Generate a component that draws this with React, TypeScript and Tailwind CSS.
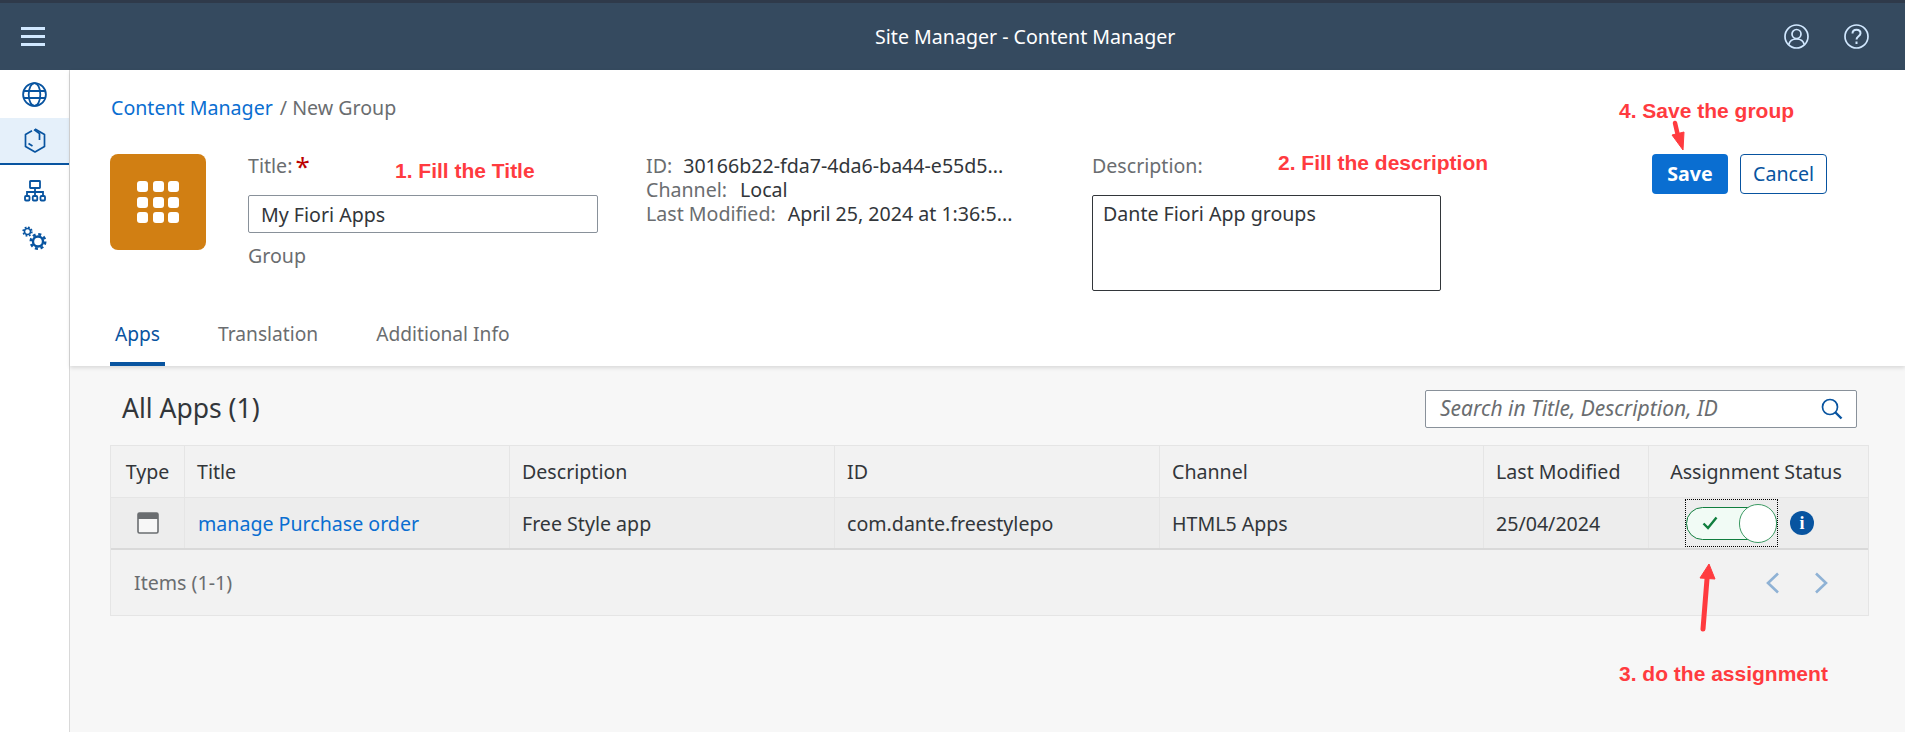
const font = { fontFamily: "'Noto Sans', Roboto, sans-serif" };

function GlobeIcon() {
  return (
    <svg width="25" height="25" viewBox="0 0 25 25" fill="none" stroke="#0854a0" strokeWidth="1.800">
      <circle cx="12.500" cy="12.500" r="11.400" />
      <ellipse cx="12.500" cy="12.500" rx="5.800" ry="11.400" />
      <path d="M1.500 9h22M1.500 16h22" strokeWidth="2" />
    </svg>
  );
}

function CubeIcon() {
  return (
    <svg width="22" height="25" viewBox="0 0 22 25" fill="none" stroke="#0854a0" strokeWidth="1.700" strokeLinejoin="round">
      <path d="M8 2.800L1.500 6.500v12L11 24l9.500-5.500v-12L11 1" />
      <path d="M10 1.600L15.500 5.500V12M4.500 15.500l4 2.500" />
    </svg>
  );
}

function NetworkIcon() {
  return (
    <svg width="22" height="22" viewBox="0 0 22 22" fill="none" stroke="#0854a0" strokeWidth="1.800">
      <rect x="6" y="1" width="10" height="7" rx="0.500" />
      <path d="M11 8v8M3 15.500V12h16v3.500" />
      <rect x="1" y="16" width="4.500" height="4.500" rx="1" />
      <rect x="8.750" y="16" width="4.500" height="4.500" rx="1" />
      <rect x="16.500" y="16" width="4.500" height="4.500" rx="1" />
    </svg>
  );
}

function GearsIcon() {
  return (
    <svg width="25" height="25" viewBox="0 0 25 25" fill="none" stroke="#0854a0">
      <circle cx="5.500" cy="5.500" r="3" strokeWidth="1.500" />
      <circle cx="5.500" cy="5.500" r="4.400" strokeWidth="1.500" strokeDasharray="1.800 1.660" />
      <circle cx="16" cy="15.500" r="5" strokeWidth="2.400" />
      <circle cx="16" cy="15.500" r="7.200" strokeWidth="2.600" strokeDasharray="3 2.660" />
    </svg>
  );
}

function GridIcon() {
  return (
    <div className="grid grid-cols-3 gap-[4.5px]">
      {Array.from({ length: 9 }).map((_, i) => (
        <div key={i} className="h-[11px] w-[11px] rounded-[3px] bg-white" />
      ))}
    </div>
  );
}

function ToggleSwitch() {
  return (
    <div className="flex h-[48px] w-[93px] items-center border border-dotted border-black">
      <div className="relative flex h-[33px] w-[92px] items-center rounded-full border border-[#107e3e] bg-[#f1fbf5] pl-[15px]">
        <svg width="16" height="14" viewBox="0 0 16 14" fill="none" stroke="#107e3e" strokeWidth="2.400">
          <path d="M1.500 7.500l4.500 4.500 8.500-10.500" />
        </svg>
        <div className="absolute right-[-1px] top-[-4px] h-[39px] w-[38px] rounded-full border border-[#3c9a63] bg-white" />
      </div>
    </div>
  );
}

const columns = "grid grid-cols-[74px_325px_325px_325px_324px_165px_221px]";
const cell = "flex items-center border-r border-[#e5e5e5] px-[12px]";

export default function App() {
  return (
    <div className="relative flex h-[732px] w-[1905px] flex-col overflow-hidden bg-white text-[19.6px] text-[#32363a]" style={font}>
      <header className="relative flex h-[70px] shrink-0 items-center justify-between border-t-[3px] border-[#2f3a4a] bg-[#354a5f] pl-[21px] pr-[36px]">
        <div className="flex w-[24px] flex-col gap-[5px]">
          <div className="h-[3px] bg-[#d1e8ff]" />
          <div className="h-[3px] bg-[#d1e8ff]" />
          <div className="h-[3px] bg-[#d1e8ff]" />
        </div>
        <span className="absolute left-[875px] text-white">Site Manager - Content Manager</span>
        <div className="flex items-center gap-[35px]">
          <svg width="25" height="25" viewBox="0 0 25 25" fill="none" stroke="#d1e8ff" strokeWidth="1.700">
            <circle cx="12.500" cy="12.500" r="11.500" />
            <circle cx="12.500" cy="10" r="4.500" />
            <path d="M4.800 20.500c.8-3.500 4-5.500 7.700-5.500s6.900 2 7.700 5.500" />
          </svg>
          <svg width="25" height="25" viewBox="0 0 25 25" fill="none" stroke="#d1e8ff" strokeWidth="1.700">
            <circle cx="12.500" cy="12.500" r="11.500" />
            <path d="M8.500 9.500c0-2.300 1.700-3.800 4-3.800s4 1.500 4 3.500c0 3-4 3-4 6.300" strokeWidth="2" />
            <path d="M12.500 17.500v2.500" strokeWidth="2" />
          </svg>
        </div>
      </header>

      <div className="flex min-h-0 flex-1">
        <nav className="flex w-[70px] shrink-0 flex-col border-r border-[#d9d9d9] bg-white">
          <div className="flex h-[48px] items-center justify-center"><GlobeIcon /></div>
          <div className="flex h-[47px] items-center justify-center border-b-2 border-[#0854a0] bg-[#e5f0fa]"><CubeIcon /></div>
          <div className="flex h-[50px] items-center justify-center pt-[2px]"><NetworkIcon /></div>
          <div className="flex h-[46px] items-center justify-center"><GearsIcon /></div>
        </nav>

        <main className="flex min-w-0 flex-1 flex-col bg-[#f7f7f7]">
          <section className="relative z-10 h-[296px] shrink-0 bg-white pl-[41px] shadow-[0_2px_4px_rgba(0,0,0,0.12)]">
            <div className="flex h-[50px] items-end leading-[24px]">
              <span className="text-[#0a6ed1]">Content Manager</span>
              <span className="ml-[7px] text-[#6a6d70]">/ New Group</span>
            </div>
            <div className="mt-[34px] ml-[-1px] flex h-[136px]">
              <div className="flex h-[96px] w-[96px] items-center justify-center rounded-[8px] bg-[#d17f13]">
                <GridIcon />
              </div>

              <div className="ml-[42px] w-[350px]">
                <div className="flex h-[24px] items-center leading-[24px] text-[#6a6d70]">
                  Title:
                  <span className="ml-[3px] text-[26px] text-[#bb0000]">*</span>
                </div>
                <input
                  readOnly
                  value="My Fiori Apps"
                  className="mt-[17px] h-[38px] w-full rounded-[2px] border border-[#89919a] px-[12px] outline-none"
                />
                <div className="mt-[11px] leading-[24px] text-[#6a6d70]">Group</div>
              </div>

              <div className="ml-[48px] w-[446px] leading-[24px]">
                <div><span className="mr-[11px] text-[#6a6d70]">ID:</span>30166b22-fda7-4da6-ba44-e55d5...</div>
                <div><span className="mr-[13px] text-[#6a6d70]">Channel:</span>Local</div>
                <div><span className="mr-[12px] text-[#6a6d70]">Last Modified:</span>April 25, 2024 at 1:36:5...</div>
              </div>

              <div className="w-[349px]">
                <div className="leading-[24px] text-[#6a6d70]">Description:</div>
                <textarea
                  readOnly
                  value="Dante Fiori App groups"
                  className="mt-[17px] h-[96px] w-full resize-none rounded-[2px] border border-[#32363a] px-[10px] py-[6px] leading-[24px] outline-none"
                />
              </div>

              <div className="ml-[211px] flex h-[40px] gap-[12px]">
                <button type="button" className="w-[76px] rounded-[4px] bg-[#0a6ed1] font-bold text-white">Save</button>
                <button type="button" className="w-[87px] rounded-[4px] border border-[#0854a0] bg-white text-[#0854a0]">Cancel</button>
              </div>
            </div>
            <div className="absolute bottom-0 left-[40px] flex gap-[48px] text-[19.2px] text-[#6a6d70]">
              <div className="h-[56px] border-b-4 border-[#0854a0] px-[5px] pt-[12px] leading-[24px] text-[#0854a0]">Apps</div>
              <div className="h-[56px] px-[5px] pt-[12px] leading-[24px]">Translation</div>
              <div className="h-[56px] px-[5px] pt-[12px] leading-[24px]">Additional Info</div>
            </div>
          </section>

          <section className="pl-[40px] pr-[36px]">
            <div className="mt-[24px] flex h-[38px] items-center justify-between pl-[12px] pr-[12px]">
              <h2 className="text-[26.5px] font-normal">All Apps (1)</h2>
              <div className="flex h-[38px] w-[432px] items-center justify-between rounded-[2px] border border-[#89919a] bg-white pl-[14px] pr-[13px]">
                <span className="text-[21px] italic text-[#6a6d70]">Search in Title, Description, ID</span>
                <svg width="22" height="22" viewBox="0 0 22 22" fill="none" stroke="#0854a0" strokeWidth="1.700">
                  <circle cx="9" cy="9" r="7.500" />
                  <path d="M14.500 14.500l6 6" strokeWidth="2.400" />
                </svg>
              </div>
            </div>

            <div className="mt-[17px] border border-[#e5e5e5]">
              <div className={`${columns} h-[52px] border-b border-[#e5e5e5] bg-[#f2f2f2]`}>
                <div className={`${cell} justify-center`}>Type</div>
                <div className={cell}>Title</div>
                <div className={cell}>Description</div>
                <div className={cell}>ID</div>
                <div className={cell}>Channel</div>
                <div className={cell}>Last Modified</div>
                <div className="flex items-center justify-center pr-[7px]">Assignment Status</div>
              </div>
              <div className={`${columns} h-[52px] border-b-2 border-[#d9d9d9] bg-[#ededed]`}>
                <div className={`${cell} justify-center`}>
                  <svg width="22" height="22" viewBox="0 0 22 22" fill="none">
                    <rect x="1" y="1" width="20" height="20" rx="1.500" stroke="#6a6d70" strokeWidth="1.600" fill="#f7f7f7" />
                    <rect x="1" y="1" width="20" height="6" fill="#6a6d70" />
                  </svg>
                </div>
                <div className={`${cell} pt-[1px]`}><span className="ml-[1px] text-[#0a6ed1]">manage Purchase order</span></div>
                <div className={`${cell} pt-[1px]`}>Free Style app</div>
                <div className={`${cell} pt-[1px]`}>com.dante.freestylepo</div>
                <div className={`${cell} pt-[1px]`}>HTML5 Apps</div>
                <div className={`${cell} pt-[1px]`}>25/04/2024</div>
                <div className="flex items-center pl-[36px]">
                  <ToggleSwitch />
                  <div className="ml-[12px] flex h-[24px] w-[24px] items-center justify-center rounded-full bg-[#0854a0] font-['Liberation_Serif'] text-[18px] font-bold text-white">i</div>
                </div>
              </div>
              <div className="flex h-[65px] items-center justify-between bg-[#f2f2f2] pl-[23px] pr-[40px] text-[#6a6d70]">
                <span>Items (1-1)</span>
                <div className="flex gap-[34px]">
                  <svg width="14" height="22" viewBox="0 0 14 22" fill="none" stroke="#8fb2d5" strokeWidth="2.600">
                    <path d="M12 1.500L2 11l10 9.500" />
                  </svg>
                  <svg width="14" height="22" viewBox="0 0 14 22" fill="none" stroke="#8fb2d5" strokeWidth="2.600">
                    <path d="M2 1.500L12 11 2 20.500" />
                  </svg>
                </div>
              </div>
            </div>
          </section>
        </main>
      </div>

      {/* red notes drawn on top of the screenshot */}
      <div className="pointer-events-none absolute inset-0 z-20 font-['Liberation_Sans'] text-[21px] font-bold text-[#ff3b3f]">
        <span className="absolute left-[395px] top-[155px]">1. Fill the Title</span>
        <span className="absolute left-[1278px] top-[147px]">2. Fill the description</span>
        <span className="absolute left-[1619px] top-[95px]">4. Save the group</span>
        <span className="absolute left-[1619px] top-[658px]">3. do the assignment</span>
        <svg className="absolute left-0 top-0" width="1905" height="732" fill="#ff3b3f" stroke="#ff3b3f">
          <path d="M1675 123l3.500 15" strokeWidth="4.500" strokeLinecap="round" />
          <path d="M1672 135l12 -3 -1 18z" strokeWidth="1" />
          <path d="M1703 629l4 -50" strokeWidth="5" strokeLinecap="round" />
          <path d="M1700 578l15 1 -6 -15z" strokeWidth="1" />
        </svg>
      </div>
    </div>
  );
}
